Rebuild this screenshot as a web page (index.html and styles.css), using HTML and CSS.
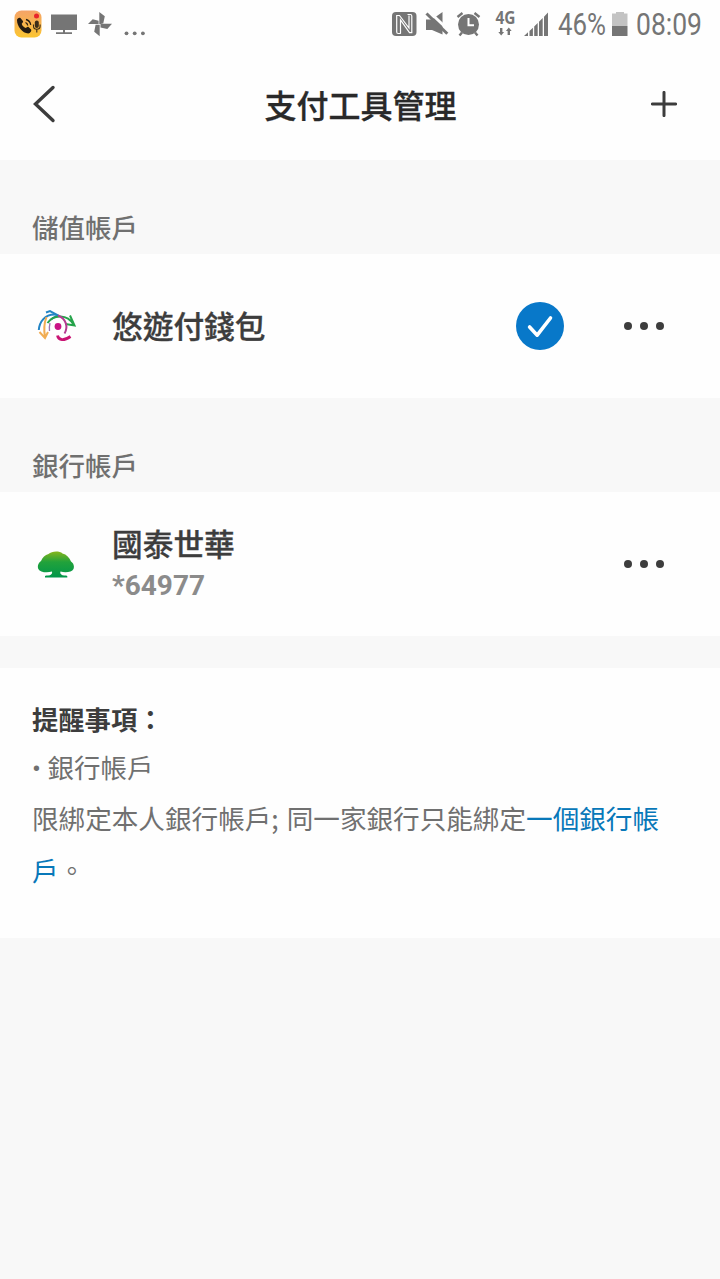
FILE: index.html
```html
<!DOCTYPE html>
<html lang="zh-Hant">
<head>
<meta charset="utf-8">
<title>支付工具管理</title>
<link rel="stylesheet" href="styles.css">
</head>
<body>
<div class="screen">
  <div class="status">
    <svg class="status-left" width="160" height="50" viewBox="0 0 160 50">
      <defs>
        <linearGradient id="call" x1="0" y1="0" x2="0" y2="1"><stop offset="0" stop-color="#f5a368"/><stop offset="1" stop-color="#fbc531"/></linearGradient>
      </defs>
      <rect x="14.500" y="10.500" width="27" height="27" rx="7" fill="url(#call)"/>
      <path d="M17 20c0-1.500 2.400-3 3.400-2l2.500 2.900c.8 1-.8 2-1.200 2.800.5 2 2 3.500 4 4.300.8-.2 1.800-1.800 2.800-1l2.400 2.300c1.200 1.200-.5 4.100-2.700 4.100-5.700 0-11.200-7-11.200-13.400z" fill="#241a10"/>
      <path d="M25.500 22.500q2 .7 2.200 3M26 19.500q4 1 4.700 5.300" fill="none" stroke="#241a10" stroke-width="1.300"/>
      <rect x="34.800" y="20.500" width="4" height="7.500" rx="2" fill="#3c2c18"/>
      <path d="M33.500 24.500v1.500a3.300 3.300 0 0 0 6.600 0v-1.500M36.800 29.500v3" fill="none" stroke="#3c2c18" stroke-width="1.100"/>
      <circle cx="36.500" cy="16" r="2.500" fill="#e8252b"/>
      <g fill="#757575">
        <path d="M51 14.500h26v15.500H51zM63 30h2v2.500h-2zM56 32.300h16v1.600H56z"/>
        <path d="M99.300 24V12l5.500 4.200-1.500 7.100zM100.500 23.800h11.500l-4.700 5.300-6.800-1.600zM99.700 24.800v11.400l-5.500-4.400 1.400-7zM98.600 24H88l4.700-4.800 5.900 1.600z"/>
        <circle cx="126.500" cy="33.300" r="1.900"/><circle cx="134.700" cy="33.300" r="1.900"/><circle cx="142.900" cy="33.300" r="1.900"/>
      </g>
    </svg>
    <svg class="status-right" width="340" height="50" viewBox="380 0 340 50">
      <g fill="#757575">
        <rect x="392" y="12" width="24.500" height="24" rx="4"/>
        <path d="M400.800 33.500h-2.600q-1.500 0-1.500-1.500V15.500h2.800L409 28V15.500M407.500 14.500h2.800q1.500 0 1.500 1.500v16.700h-2.300L400.500 20v13.500" fill="none" stroke="#fefefe" stroke-width="1.200"/>
        <path d="M426 19.500h6l10.500-7.500v22.500L432 30h-6z"/>
        <path d="M429.500 12l20 19" stroke="#fefefe" stroke-width="3"/>
        <path d="M426.500 13.500l20.800 20.300" stroke="#757575" stroke-width="3"/>
        <circle cx="468.500" cy="24.500" r="10.500"/>
        <path d="M457.500 17l5-4M479.500 17l-5-4M462 32.500l-2.500 3M475 32.500l2.500 3" stroke="#757575" stroke-width="2.400"/>
        <path d="M468.500 18v7.300h5.500" fill="none" stroke="#fff" stroke-width="2"/>
        <text class="network" x="495.500" y="24" textLength="20" lengthAdjust="spacingAndGlyphs">4G</text>
        <path d="M500 28h2.400v4h1.700L501.200 35.500 498.300 32h1.700zM507.600 35h2.400v-4h1.700L508.800 27.500 505.900 31h1.700z"/>
        <path d="M524 36l4-3.700V36zM529.500 31l3.400-3.200V36h-3.400zM534.200 26.500l3.500-3.400V36h-3.500zM539 21.700l3.700-3.600V36H539zM544 16.800l4-4.300V36h-4z"/>
        <path d="M612 13.500h4V12h8v1.500h3.500V26H612z" fill="#c3c3c3"/>
        <path d="M612 26h15.500v10H612z"/>
        <text class="clock" x="558" y="35.300" textLength="48" lengthAdjust="spacingAndGlyphs">46%</text>
        <text class="clock" x="636" y="35.300" textLength="66" lengthAdjust="spacingAndGlyphs">08:09</text>
      </g>
    </svg>
  </div>
  <header class="header">
    <svg width="24" height="40" viewBox="0 0 24 40"><path d="M21 3.500L3.500 20l17.500 16.500" fill="none" stroke="#3c3c3c" stroke-width="3.400" stroke-linecap="round"/></svg>
    <h1 class="title">支付工具管理</h1>
    <svg width="26" height="26" viewBox="0 0 26 26"><path d="M13 1.400v23.200M1.400 13h23.200" stroke="#3c3c3c" stroke-width="3" stroke-linecap="round"/></svg>
  </header>
  <h2 class="section">儲值帳戶</h2>
  <div class="row">
    <svg class="logo" width="48" height="48" viewBox="32 302 48 48" fill="none" stroke-width="2">
      <path d="M38.800 330c.5-8 6-16 16.500-15.500" stroke="#2385c5"/><path d="M46 312.500l4-1.500 7.500 4-6.500 4.500" stroke="#2385c5"/>
      <path d="M46.500 317q-3.500 9-1.500 20M39.500 332l5.500 6 3-6" stroke="#f1ad53"/>
      <path d="M47.500 323c6-9 20-9 26 1.500M70 315.500l4.500 10-9-1.500" stroke="#25a34a"/>
      <path d="M58 315.500c8 3 10.500 11.500 6.500 18" stroke="#b53b91"/>
      <path d="M49.500 331q-.5-4 .5-8" stroke="#9b75b3" stroke-width="1.300"/>
      <circle cx="58" cy="326.500" r="3.400" fill="#c91485"/>
      <path d="M57.500 335.500c1 5 6.500 5.500 13 1" stroke="#c91473" stroke-width="2.800"/>
    </svg>
    <div class="name">悠遊付錢包</div>
    <svg class="check" width="48" height="48" viewBox="0 0 48 48"><circle cx="24" cy="24" r="24" fill="#0878c9"/><path d="M13.600 25l7.600 8.200L34.500 16" fill="none" stroke="#fff" stroke-width="3.600" stroke-linecap="round" stroke-linejoin="round"/></svg>
    <svg width="40" height="8" viewBox="0 0 40 8" fill="#3d3d3d"><circle cx="4" cy="4" r="4"/><circle cx="20" cy="4" r="4"/><circle cx="36" cy="4" r="4"/></svg>
  </div>
  <h2 class="section">銀行帳戶</h2>
  <div class="row">
    <svg class="logo" width="48" height="48" viewBox="32 540 48 48">
      <defs><linearGradient id="tree" x1="0" y1="0" x2="0" y2="1"><stop offset="0" stop-color="#87b51c"/><stop offset=".4" stop-color="#22a23b"/><stop offset="1" stop-color="#00964a"/></linearGradient></defs>
      <path d="M38.300 569c-1.200-3 .2-6.500 2.700-8 1.500-3.500 4-6 7.500-7 3-3 11-3.400 14-.5 4 1 7 4 8.500 8 2.500 1.500 3.700 5 2.500 7.500-1.500 3.200-8 4-13 2.600-.7 1.700.2 2.800 2 3.600 2.300.3 4.800.2 4.800 1v1.300H45v-1.300c0-.8 2.500-.7 5-1 1.500-.8 2.500-1.900 2-3.600-5 1.400-12 .9-13.700-2.600z" fill="url(#tree)"/>
    </svg>
    <div class="name name-stacked">國泰世華<div class="number">*64977</div></div>
    <svg width="40" height="8" viewBox="0 0 40 8" fill="#3d3d3d"><circle cx="4" cy="4" r="4"/><circle cx="20" cy="4" r="4"/><circle cx="36" cy="4" r="4"/></svg>
  </div>
  <div class="notice">
    <h3 class="notice-title">提醒事項：</h3>
    <p class="bullet">• 銀行帳戶</p>
    <p class="note">限綁定本人銀行帳戶<span class="pause">; </span>同一家銀行只能綁定<span class="link">一個銀行帳<br>戶</span>。</p>
  </div>
</div>
</body>
</html>
```

FILE: styles.css
```css
* { box-sizing: border-box; }
body { margin: 0; background: #f8f8f8; font-family: Roboto, "Noto Sans CJK TC", sans-serif; color: #3d3d3d; }
h1, h2, h3, p { margin: 0; }
svg { display: block; flex: none; }
.screen { width: 720px; height: 1279px; overflow: hidden; }
.status { height: 50px; background: #fefefe; display: flex; justify-content: space-between; }
.network { font: bold 17px "Open Sans", sans-serif; }
.clock { font: 31px Roboto, sans-serif; }
.header { height: 110px; padding: 0 43px 2px 32px; background: #fefefe; display: flex; align-items: center; justify-content: space-between; }
.title { font-size: 32px; line-height: 48px; font-weight: 500; color: #292929; margin-left: 14px; padding-top: 6px; -webkit-text-stroke: .3px; }
.section { height: 94px; padding: 50px 32px 0; font-size: 26.500px; line-height: 38px; font-weight: 500; color: #707070; }
.row { height: 144px; padding: 0 56px 0 32px; background: #fefefe; display: flex; align-items: center; }
.name { flex: 1; margin-left: 32px; padding-top: 4px; font-size: 30.700px; line-height: 44px; font-weight: 500; -webkit-text-stroke: .3px; }
.name-stacked { padding-top: 0; }
.number { margin-top: -1px; font-size: 28px; line-height: 38px; font-weight: 700; color: #8b8b8b; -webkit-text-stroke: 0; }
.check { margin-right: 60px; }
.notice { margin-top: 32px; height: 270px; padding: 33px 32px 0; background: #fefefe; font-size: 26.500px; color: #707070; }
.notice-title { font-size: 26.300px; line-height: 40px; font-weight: 700; color: #3d3d3d; }
.bullet { line-height: 52px; margin-top: 2px; }
.note { line-height: 52px; white-space: nowrap; font-size: 26.600px; margin-top: -1px; }
.pause { font-family: "Noto Sans CJK TC", sans-serif; letter-spacing: 1px; line-height: 1; }
.link { color: #0878b9; }
```
